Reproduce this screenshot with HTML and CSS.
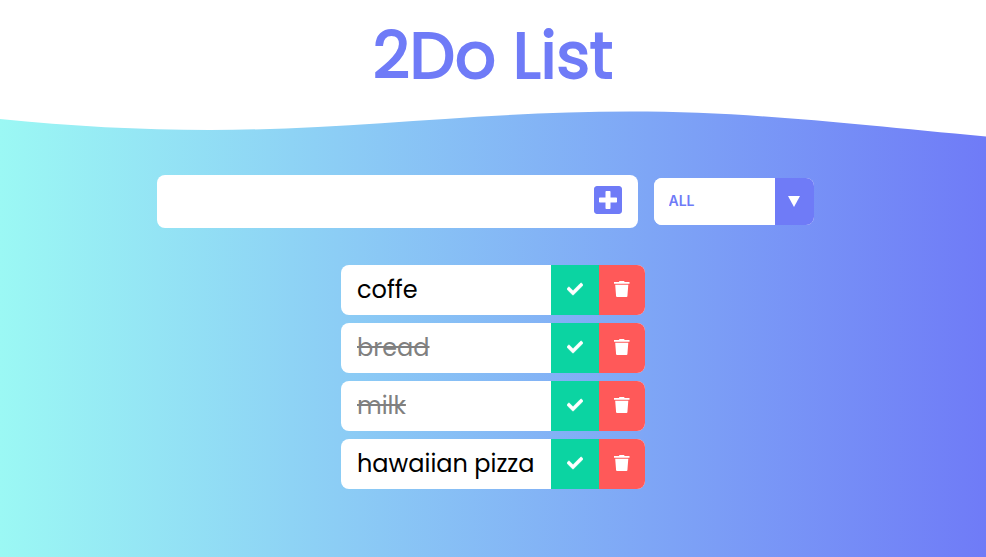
FILE: index.html
```html
<!DOCTYPE html>
<html lang="en">
<head>
<meta charset="utf-8">
<meta name="viewport" content="width=device-width, initial-scale=1">
<title>2Do List</title>
<link rel="stylesheet" href="styles.css">
</head>
<body>
<svg class="sprite" aria-hidden="true">
  <symbol id="plus" viewBox="0 32 448 448"><path d="M400 32H48C21.5 32 0 53.5 0 80v352c0 26.5 21.5 48 48 48h352c26.5 0 48-21.5 48-48V80c0-26.5-21.5-48-48-48zm-32 252c0 6.6-5.4 12-12 12h-92v92c0 6.6-5.4 12-12 12h-56c-6.6 0-12-5.4-12-12v-92H92c-6.6 0-12-5.4-12-12v-56c0-6.6 5.4-12 12-12h92v-92c0-6.6 5.4-12 12-12h56c6.6 0 12 5.4 12 12v92h92c6.6 0 12 5.4 12 12v56z"/></symbol>
  <symbol id="check" viewBox="0 0 512 512"><path stroke="currentColor" stroke-width="20" d="M173.898 439.404l-166.4-166.4c-9.997-9.997-9.997-26.206 0-36.204l36.203-36.204c9.997-9.998 26.207-9.998 36.204 0L192 312.69 432.095 72.596c9.997-9.997 26.207-9.997 36.204 0l36.203 36.204c9.997 9.997 9.997 26.206 0 36.204l-294.4 294.401c-9.998 9.997-26.207 9.997-36.204-.001z"/></symbol>
  <symbol id="trash" viewBox="0 0 16 16"><path d="M5.5 0H10L10.7 1H15.5V2.8H0V1H4.8ZM1.2 3.8H14.3L13.4 15.2Q13.3 16 12.5 16H3Q2.2 16 2.1 15.2Z"/></symbol>
</svg>
<header class="header">
  <h1 class="title">2Do List</h1>
</header>
<main class="main">
  <svg class="wave" viewBox="0 0 986 26" preserveAspectRatio="none" aria-hidden="true"><path d="M0 0V8C70 15 140 19 210 19C350 19 480 0.5 630 0.5C750 0.5 850 13 986 25.5V0Z"/></svg>
  <form class="form">
    <div class="field">
      <input class="field-input" type="text" aria-label="New task">
      <button class="add" type="button" aria-label="Add task"><svg class="icon-plus"><use href="#plus"/></svg></button>
    </div>
    <div class="filter">
      <select class="filter-select" aria-label="Filter tasks">
        <option>ALL</option>
        <option>COMPLETED</option>
        <option>UNCOMPLETED</option>
      </select>
      <span class="filter-arrow" aria-hidden="true"><svg class="icon-arrow" viewBox="0 0 12 11"><path d="M0 0H12L6 11Z"/></svg></span>
    </div>
  </form>
  <ul class="list">
    <li class="item">
      <span class="text">coffe</span>
      <button class="done" type="button" aria-label="Complete coffe"><svg class="icon-check"><use href="#check"/></svg></button>
      <button class="remove" type="button" aria-label="Delete coffe"><svg class="icon-trash"><use href="#trash"/></svg></button>
    </li>
    <li class="item completed">
      <span class="text">bread</span>
      <button class="done" type="button" aria-label="Complete bread"><svg class="icon-check"><use href="#check"/></svg></button>
      <button class="remove" type="button" aria-label="Delete bread"><svg class="icon-trash"><use href="#trash"/></svg></button>
    </li>
    <li class="item completed">
      <span class="text">milk</span>
      <button class="done" type="button" aria-label="Complete milk"><svg class="icon-check"><use href="#check"/></svg></button>
      <button class="remove" type="button" aria-label="Delete milk"><svg class="icon-trash"><use href="#trash"/></svg></button>
    </li>
    <li class="item">
      <span class="text">hawaiian pizza</span>
      <button class="done" type="button" aria-label="Complete hawaiian pizza"><svg class="icon-check"><use href="#check"/></svg></button>
      <button class="remove" type="button" aria-label="Delete hawaiian pizza"><svg class="icon-trash"><use href="#trash"/></svg></button>
    </li>
  </ul>
</main>
</body>
</html>
```
FILE: styles.css
```css
* {
  box-sizing: border-box;
  margin: 0;
  padding: 0;
}

body {
  display: flex;
  flex-direction: column;
  min-height: 100vh;
  background: #fff;
  font-family: Poppins, Inter, sans-serif;
}

button,
input,
select {
  border: none;
  font-family: inherit;
}

button {
  display: flex;
  align-items: center;
  justify-content: center;
  cursor: pointer;
}

svg {
  display: block;
  fill: currentColor;
}

.sprite {
  position: absolute;
  width: 0;
  height: 0;
}

.header {
  padding: 8px 16px 7px;
  text-align: center;
}

.title {
  color: #6f7bf7;
  font-size: 64px;
  font-weight: 400;
  line-height: 96px;
  -webkit-text-stroke: 2px #6f7bf7;
}

.main {
  flex: 1;
  background: linear-gradient(to right, #9bf8f4, #6f7bf7);
}

.wave {
  width: 100%;
  height: 26px;
  color: #fff;
}

.form {
  display: flex;
  align-items: center;
  justify-content: center;
  gap: 16px;
  padding: 38px 32px 37px 16px;
}

.field {
  display: flex;
  flex: 0 1 481px;
  height: 53px;
  overflow: hidden;
  border-radius: 8px;
  background: #fff;
}

.field-input {
  flex: 1;
  min-width: 0;
  padding: 8px 16px;
  background: transparent;
  font-size: 24px;
  outline: none;
}

.add {
  padding: 0 16px 4px;
  background: transparent;
  color: #6f7bf7;
}

.icon-plus {
  width: 28px;
  height: 28px;
}

.filter {
  display: flex;
  flex: 0 0 160px;
  height: 47px;
  overflow: hidden;
  border-radius: 8px;
  background: #fff;
}

.filter-select {
  flex: 1;
  min-width: 0;
  padding: 0 15px 2px;
  appearance: none;
  background: #fff;
  color: #6f7bf7;
  font-family: Inter, sans-serif;
  font-size: 14px;
  font-weight: 600;
  outline: none;
}

.filter-arrow {
  display: flex;
  align-items: center;
  justify-content: center;
  width: 39px;
  background: #6f7bf7;
  color: #fff;
}

.icon-arrow {
  width: 12px;
  height: 11px;
}

.list {
  display: flex;
  flex-direction: column;
  align-items: center;
  gap: 8px;
  padding-bottom: 32px;
  list-style: none;
}

.item {
  display: flex;
  width: 304px;
  height: 50px;
  overflow: hidden;
  border-radius: 8px;
  background: #fff;
}

.text {
  flex: 1;
  padding-left: 16px;
  color: #000;
  font-size: 24px;
  line-height: 50px;
  white-space: nowrap;
}

.completed .text {
  color: #808080;
  text-decoration: line-through;
}

.done,
.remove {
  padding-bottom: 2px;
  color: #fff;
}

.done {
  width: 48px;
  background: #0bd4a2;
}

.remove {
  width: 46px;
  background: #ff5959;
}

.icon-check,
.icon-trash {
  width: 16px;
  height: 16px;
}
```
